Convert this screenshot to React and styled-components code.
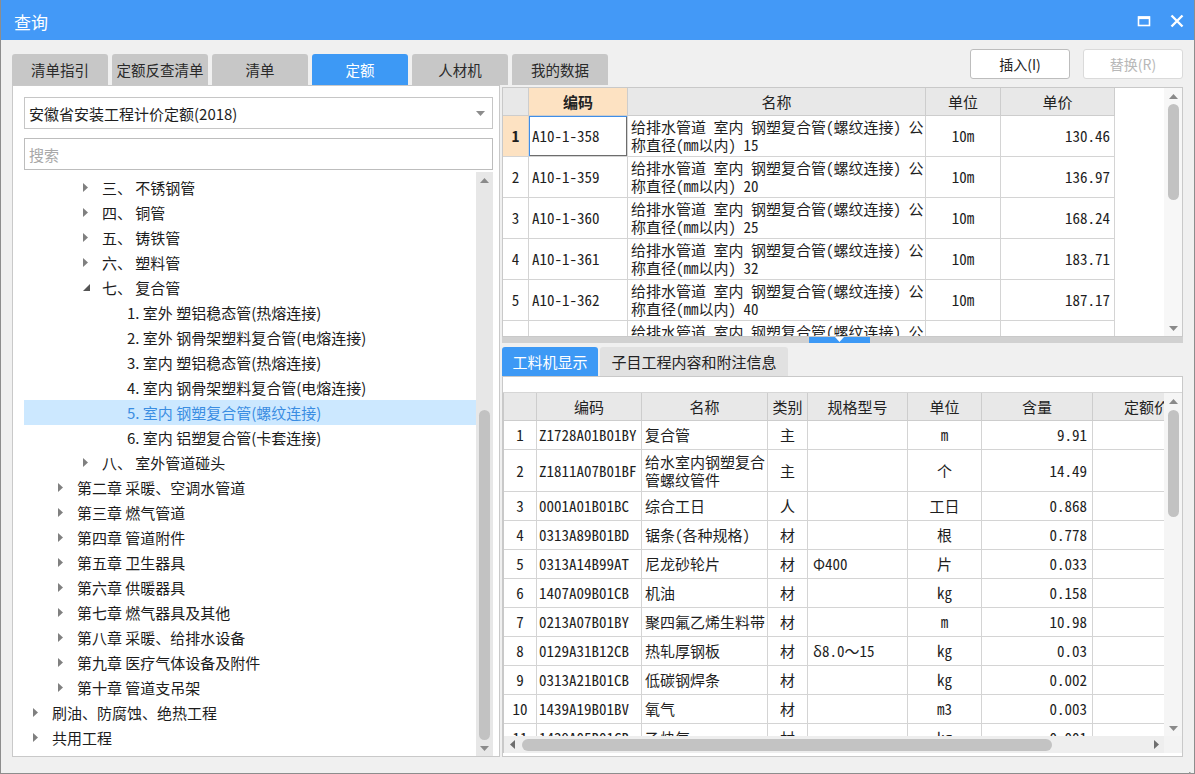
import React from 'react';
import styled, { createGlobalStyle } from 'styled-components';

const UI_FONT = `"Noto Sans CJK SC", "Noto Sans", sans-serif`;
const GRID_FONT = `"Noto Sans Mono CJK SC", "Noto Sans CJK SC", "Liberation Mono", monospace`;

const GlobalStyle = createGlobalStyle`
  html, body { margin: 0; padding: 0; background: #ffffff; }
  body { font-family: ${UI_FONT}; }
  * { box-sizing: border-box; }
`;

const Window = styled.div`
  position: relative;
  width: 1195px;
  height: 774px;
  display: flex;
  flex-direction: column;
  background: #f0f0f0;
  border: 1px solid #8d8d8d;
  border-top: none;
`;

const TitleBar = styled.div`
  height: 40px;
  flex: none;
  display: flex;
  align-items: center;
  justify-content: space-between;
  padding: 0 9px 0 13px;
  background: #4399f7;
  color: #ffffff;
`;

const TitleText = styled.span`
  font-size: 17px;
  margin-top: 2px;
`;

const TitleButtons = styled.div`
  display: flex;
  gap: 17px;
  margin-top: 1px;
`;

const Body = styled.div`
  flex: 1;
  min-height: 0;
  display: flex;
  flex-direction: column;
  padding: 0 11px 15px 11px;
`;

const TopRow = styled.div`
  height: 45px;
  flex: none;
  display: flex;
  justify-content: space-between;
`;

const Tabs = styled.div`
  display: flex;
  gap: 4px;
  align-self: flex-end;
`;

const Tab = styled.div`
  width: 96px;
  height: 31px;
  display: flex;
  align-items: center;
  justify-content: center;
  border-radius: 3px 3px 0 0;
  font-size: 14.5px;
  background: ${p => (p.$active ? '#3d99f5' : '#c7c7c7')};
  color: ${p => (p.$active ? '#ffffff' : '#2a2a2a')};
`;

const Buttons = styled.div`
  display: flex;
  gap: 13px;
  margin-top: 9px;
`;

const Button = styled.div`
  width: 100px;
  height: 30px;
  display: flex;
  align-items: center;
  justify-content: center;
  background: #ffffff;
  border: 1px solid ${p => (p.$disabled ? '#dadada' : '#bdbdbd')};
  border-radius: 3px;
  font-size: 14px;
  color: ${p => (p.$disabled ? '#b8b8b8' : '#222222')};
`;

const Main = styled.div`
  height: 672px;
  flex: none;
  display: flex;
`;

const LeftPanel = styled.div`
  width: 488px;
  flex: none;
  display: flex;
  flex-direction: column;
  background: #ffffff;
  border: 1px solid #c9c9c9;
  padding: 11px 6px 0 11px;
`;

const Select = styled.div`
  height: 32px;
  flex: none;
  display: flex;
  align-items: center;
  justify-content: space-between;
  padding: 0 7px 0 4px;
  border: 1px solid #c6c6c6;
  font-size: 15px;
  color: #1e1e1e;
`;

const Search = styled.input`
  height: 32px;
  flex: none;
  margin-top: 9px;
  padding: 0 4px;
  border: 1px solid #bdbdbd;
  outline: none;
  font-family: ${UI_FONT};
  font-size: 15px;
  &::placeholder { color: #a8a8a8; }
`;

const TreeBox = styled.div`
  flex: 1;
  display: flex;
  margin-top: 2px;
  min-height: 0;
`;

const TreeList = styled.div`
  flex: 1;
  min-width: 0;
  padding-top: 3px;
  overflow: hidden;
`;

const TreeRow = styled.div`
  height: 25px;
  display: flex;
  align-items: center;
  padding-left: ${p => p.$level * 25}px;
  background: ${p => (p.$selected ? '#cce8ff' : 'transparent')};
  color: ${p => (p.$selected ? '#3a8de2' : '#1c1c1c')};
  font-size: 15px;
  white-space: nowrap;
`;

const ArrowSlot = styled.span`
  width: 28px;
  flex: none;
  display: flex;
  align-items: center;
  padding-left: 9px;
`;

const RightPanel = styled.div`
  flex: 1;
  min-width: 0;
  min-height: 0;
  display: flex;
  flex-direction: column;
  padding: 2px 0 0 2px;
`;

const UpperGrid = styled.div`
  height: 250px;
  flex: none;
  display: flex;
  background: #ffffff;
  border: 1px solid #c9c9c9;
`;

const GridArea = styled.div`
  flex: 1;
  min-width: 0;
  min-height: 0;
  overflow: hidden;
  background: #ffffff;
`;

const Grid = styled.table`
  border-collapse: collapse;
  table-layout: fixed;
  width: ${p => p.$width}px;
  margin: -1px 0 0 -1px;
  font-family: ${GRID_FONT};
  font-size: 15px;
  color: #1e1e1e;
`;

const HeadRow = styled.tr`
  height: 28px;
`;

const BodyRow = styled.tr`
  height: ${p => p.$h}px;
`;

const HeadCell = styled.th`
  padding: 0;
  border: 1px solid #cdcdcd;
  background: ${p => (p.$hl ? '#fde2c2' : '#e8e8e8')};
  font-family: ${UI_FONT};
  font-size: 15px;
  font-weight: ${p => (p.$hl ? 700 : 400)};
  color: #222222;
  text-align: center;
  white-space: nowrap;
  overflow: hidden;
`;

const Cell = styled.td`
  border: 1px solid #d4d4d4;
  padding: 0 ${p => p.$pr ?? 3}px 0 ${p => p.$pl ?? 3}px;
  text-align: ${p => p.$align || 'left'};
  vertical-align: middle;
  background: ${p => (p.$hl ? '#fde2c2' : '#ffffff')};
  font-weight: ${p => (p.$bold ? 700 : 400)};
  box-shadow: ${p => (p.$focus ? 'inset 1px 1px 0 #3f8ee8, inset -1px -1px 0 #6d6d6d' : 'none')};
  line-height: 18px;
  white-space: ${p => (p.$wrap ? 'normal' : 'nowrap')};
  overflow: hidden;
`;

const Splitter = styled.div`
  height: 6px;
  flex: none;
  display: flex;
  padding-left: 307px;
  background: #d1d1d1;
`;

const SplitHandle = styled.div`
  width: 61px;
  height: 6px;
  display: flex;
  justify-content: center;
  background: #3d99f5;
`;

const LowerTabs = styled.div`
  height: 29px;
  flex: none;
  margin-top: 4px;
  display: flex;
  gap: 2px;
`;

const LowerTab = styled.div`
  width: ${p => p.$w}px;
  display: flex;
  align-items: center;
  justify-content: center;
  border-radius: 3px 3px 0 0;
  font-size: 15px;
  background: ${p => (p.$active ? '#3d99f5' : '#e1e1e1')};
  color: ${p => (p.$active ? '#ffffff' : '#222222')};
`;

const LowerPanel = styled.div`
  flex: 1;
  min-height: 0;
  display: flex;
  flex-direction: column;
  background: #ffffff;
  border: 1px solid #c9c9c9;
  padding-bottom: 3px;
`;

const ToolStrip = styled.div`
  height: 16px;
  flex: none;
  border-bottom: 1px solid #d6d6d6;
`;

const LowerGrid = styled.div`
  flex: 1;
  display: flex;
  min-height: 0;
  border-left: 1px solid #c9c9c9;
`;

const HScrollRow = styled.div`
  height: 17px;
  flex: none;
  display: flex;
  border-left: 1px solid #c9c9c9;
  background: #eeeeee;
`;

const HTrack = styled.div`
  flex: 1;
  display: flex;
  align-items: center;
`;

const HThumb = styled.div`
  width: ${p => p.$w}px;
  height: 12px;
  margin-left: 2px;
  border-radius: 6px;
  background: #c3c3c3;
`;

const HArrowBox = styled.div`
  width: 16px;
  height: 17px;
  flex: none;
  display: flex;
  align-items: center;
  justify-content: center;
`;

const HFill = styled.div`
  flex: 1;
`;

const Corner = styled.div`
  width: 18px;
  flex: none;
  background: #f3f3f3;
`;

const VTrack = styled.div`
  width: ${p => p.$w}px;
  flex: none;
  display: flex;
  flex-direction: column;
  background: ${p => p.$bg};
`;

const VArrowBox = styled.div`
  height: 16px;
  flex: none;
  display: flex;
  align-items: center;
  justify-content: center;
`;

const VThumbArea = styled.div`
  flex: 1;
  display: flex;
  flex-direction: column;
  align-items: center;
`;

const VThumb = styled.div`
  width: 11px;
  height: ${p => p.$h}px;
  margin-top: ${p => p.$top}px;
  border-radius: 6px;
  background: #c2c2c2;
`;

const Grip = styled.div`
  position: absolute;
  right: 3px;
  bottom: 3px;
  width: 9px;
  height: 9px;
`;

const Tri = ({ dir, color = '#7c7c7c' }) => {
  const shapes = {
    up: { w: 9, h: 5, p: '0,5 4.5,0 9,5' },
    down: { w: 9, h: 5, p: '0,0 9,0 4.5,5' },
    left: { w: 5, h: 9, p: '5,0 5,9 0,4.5' },
    right: { w: 5, h: 9, p: '0,0 5,4.5 0,9' },
  };
  const s = shapes[dir];
  return (
    <svg width={s.w} height={s.h} viewBox={`0 0 ${s.w} ${s.h}`}>
      <polygon points={s.p} fill={color} />
    </svg>
  );
};

const TreeArrow = ({ open }) =>
  open ? (
    <svg width="7" height="7" viewBox="0 0 7 7">
      <polygon points="7,0 7,7 0,7" fill="#555555" />
    </svg>
  ) : (
    <svg width="5" height="9" viewBox="0 0 5 9">
      <polygon points="0,0 5,4.5 0,9" fill="#808080" />
    </svg>
  );

const VScroll = ({ width, bg, top, size }) => (
  <VTrack $w={width} $bg={bg}>
    <VArrowBox>
      <Tri dir="up" color="#8a8a8a" />
    </VArrowBox>
    <VThumbArea>
      <VThumb $top={top} $h={size} />
    </VThumbArea>
    <VArrowBox>
      <Tri dir="down" color="#8a8a8a" />
    </VArrowBox>
  </VTrack>
);

const tree = [
  { level: 2, text: '三、 不锈钢管', arrow: 'closed' },
  { level: 2, text: '四、 铜管', arrow: 'closed' },
  { level: 2, text: '五、 铸铁管', arrow: 'closed' },
  { level: 2, text: '六、 塑料管', arrow: 'closed' },
  { level: 2, text: '七、 复合管', arrow: 'open' },
  { level: 3, text: '1. 室外 塑铝稳态管(热熔连接)' },
  { level: 3, text: '2. 室外 钢骨架塑料复合管(电熔连接)' },
  { level: 3, text: '3. 室内 塑铝稳态管(热熔连接)' },
  { level: 3, text: '4. 室内 钢骨架塑料复合管(电熔连接)' },
  { level: 3, text: '5. 室内 钢塑复合管(螺纹连接)', selected: true },
  { level: 3, text: '6. 室内 铝塑复合管(卡套连接)' },
  { level: 2, text: '八、 室外管道碰头', arrow: 'closed' },
  { level: 1, text: '第二章 采暖、空调水管道', arrow: 'closed' },
  { level: 1, text: '第三章 燃气管道', arrow: 'closed' },
  { level: 1, text: '第四章 管道附件', arrow: 'closed' },
  { level: 1, text: '第五章 卫生器具', arrow: 'closed' },
  { level: 1, text: '第六章 供暖器具', arrow: 'closed' },
  { level: 1, text: '第七章 燃气器具及其他', arrow: 'closed' },
  { level: 1, text: '第八章 采暖、给排水设备', arrow: 'closed' },
  { level: 1, text: '第九章 医疗气体设备及附件', arrow: 'closed' },
  { level: 1, text: '第十章 管道支吊架', arrow: 'closed' },
  { level: 0, text: '刷油、防腐蚀、绝热工程', arrow: 'closed' },
  { level: 0, text: '共用工程', arrow: 'closed' },
];

const quotas = [
  ['A10-1-358', '15', '130.46'],
  ['A10-1-359', '20', '136.97'],
  ['A10-1-360', '25', '168.24'],
  ['A10-1-361', '32', '183.71'],
  ['A10-1-362', '40', '187.17'],
  ['A10-1-363', '50', '203.52'],
];

const upperCols = [26, 99, 298, 75, 114];
const lowerCols = [33, 105, 126, 40, 100, 74, 111, 108];

const materials = [
  ['Z1728A01B01BY', '复合管', '主', '', 'm', '9.91'],
  ['Z1811A07B01BF', '给水室内钢塑复合管螺纹管件', '主', '', '个', '14.49'],
  ['0001A01B01BC', '综合工日', '人', '', '工日', '0.868'],
  ['0313A89B01BD', '锯条(各种规格)', '材', '', '根', '0.778'],
  ['0313A14B99AT', '尼龙砂轮片', '材', 'Φ400', '片', '0.033'],
  ['1407A09B01CB', '机油', '材', '', 'kg', '0.158'],
  ['0213A07B01BY', '聚四氟乙烯生料带', '材', '', 'm', '10.98'],
  ['0129A31B12CB', '热轧厚钢板', '材', 'δ8.0～15', 'kg', '0.03'],
  ['0313A21B01CB', '低碳钢焊条', '材', '', 'kg', '0.002'],
  ['1439A19B01BV', '氧气', '材', '', 'm3', '0.003'],
  ['1439A05B01CB', '乙炔气', '材', '', 'kg', '0.001'],
];

const Cols = ({ widths }) => (
  <colgroup>
    {widths.map((w, i) => (
      <col key={i} style={{ width: w }} />
    ))}
  </colgroup>
);

const App = () => (
  <>
    <GlobalStyle />
    <Window>
      <TitleBar>
        <TitleText>查询</TitleText>
        <TitleButtons>
          <svg width="16" height="16" viewBox="0 0 16 16">
            <rect x="2.5" y="4" width="11" height="8.5" fill="none" stroke="#fff" strokeWidth="1.6" />
            <rect x="2" y="3.5" width="12" height="2.6" fill="#fff" />
          </svg>
          <svg width="16" height="16" viewBox="0 0 16 16">
            <path d="M2.5 2.5 L13.5 13.5 M13.5 2.5 L2.5 13.5" stroke="#fff" strokeWidth="2.4" />
          </svg>
        </TitleButtons>
      </TitleBar>
      <Body>
        <TopRow>
          <Tabs>
            <Tab>清单指引</Tab>
            <Tab>定额反查清单</Tab>
            <Tab>清单</Tab>
            <Tab $active>定额</Tab>
            <Tab>人材机</Tab>
            <Tab>我的数据</Tab>
          </Tabs>
          <Buttons>
            <Button>插入(I)</Button>
            <Button $disabled>替换(R)</Button>
          </Buttons>
        </TopRow>
        <Main>
          <LeftPanel>
            <Select>
              <span>安徽省安装工程计价定额(2018)</span>
              <Tri dir="down" color="#8c8c8c" />
            </Select>
            <Search placeholder="搜索" />
            <TreeBox>
              <TreeList>
                {tree.map((n, i) => (
                  <TreeRow key={i} $level={n.level} $selected={n.selected}>
                    <ArrowSlot>{n.arrow && <TreeArrow open={n.arrow === 'open'} />}</ArrowSlot>
                    {n.text}
                  </TreeRow>
                ))}
              </TreeList>
              <VScroll width={17} bg="#e7e7e7" top={222} size={330} />
            </TreeBox>
          </LeftPanel>
          <RightPanel>
            <UpperGrid>
              <GridArea>
                <Grid $width={612}>
                  <Cols widths={upperCols} />
                  <thead>
                    <HeadRow>
                      <HeadCell />
                      <HeadCell $hl>编码</HeadCell>
                      <HeadCell>名称</HeadCell>
                      <HeadCell>单位</HeadCell>
                      <HeadCell>单价</HeadCell>
                    </HeadRow>
                  </thead>
                  <tbody>
                    {quotas.map(([code, dia, price], i) => (
                      <BodyRow key={code} $h={41}>
                        <Cell $align="center" $hl={i === 0} $bold={i === 0}>
                          {i + 1}
                        </Cell>
                        <Cell $focus={i === 0}>{code}</Cell>
                        <Cell $pr={0}>
                          给排水管道 室内 钢塑复合管(螺纹连接) 公<br />
                          称直径(mm以内) {dia}
                        </Cell>
                        <Cell $align="center">10m</Cell>
                        <Cell $align="right" $pr={4}>
                          {price}
                        </Cell>
                      </BodyRow>
                    ))}
                  </tbody>
                </Grid>
              </GridArea>
              <VScroll width={18} bg="#f7f7f7" top={0} size={96} />
            </UpperGrid>
            <Splitter>
              <SplitHandle>
                <Tri dir="down" color="#ffffff" />
              </SplitHandle>
            </Splitter>
            <LowerTabs>
              <LowerTab $w={96} $active>
                工料机显示
              </LowerTab>
              <LowerTab $w={188}>子目工程内容和附注信息</LowerTab>
            </LowerTabs>
            <LowerPanel>
              <ToolStrip />
              <LowerGrid>
                <GridArea>
                  <Grid $width={697}>
                    <Cols widths={lowerCols} />
                    <thead>
                      <HeadRow>
                        <HeadCell />
                        <HeadCell>编码</HeadCell>
                        <HeadCell>名称</HeadCell>
                        <HeadCell>类别</HeadCell>
                        <HeadCell>规格型号</HeadCell>
                        <HeadCell>单位</HeadCell>
                        <HeadCell>含量</HeadCell>
                        <HeadCell>定额价</HeadCell>
                      </HeadRow>
                    </thead>
                    <tbody>
                      {materials.map(([code, name, kind, spec, unit, qty], i) => (
                        <BodyRow key={code} $h={i === 1 ? 42 : 29}>
                          <Cell $align="center">{i + 1}</Cell>
                          <Cell $pl={2} $pr={0}>
                            {code}
                          </Cell>
                          <Cell $wrap $pr={2}>
                            {name}
                          </Cell>
                          <Cell $align="center">{kind}</Cell>
                          <Cell $pl={5}>{spec}</Cell>
                          <Cell $align="center">{unit}</Cell>
                          <Cell $align="right" $pr={5}>
                            {qty}
                          </Cell>
                          <Cell />
                        </BodyRow>
                      ))}
                    </tbody>
                  </Grid>
                </GridArea>
                <VScroll width={18} bg="#f5f5f5" top={1} size={107} />
              </LowerGrid>
              <HScrollRow>
                <HTrack>
                  <HArrowBox>
                    <Tri dir="left" color="#6e6e6e" />
                  </HArrowBox>
                  <HThumb $w={530} />
                  <HFill />
                  <HArrowBox>
                    <Tri dir="right" color="#6e6e6e" />
                  </HArrowBox>
                </HTrack>
                <Corner />
              </HScrollRow>
            </LowerPanel>
          </RightPanel>
        </Main>
      </Body>
      <Grip>
        <svg width="9" height="9" viewBox="0 0 9 9">
          {[
            [7, 1],
            [4, 4],
            [7, 4],
            [1, 7],
            [4, 7],
            [7, 7],
          ].map(([x, y], i) => (
            <rect key={i} x={x} y={y} width="1.5" height="1.5" fill="#9a9a9a" />
          ))}
        </svg>
      </Grip>
    </Window>
  </>
);

export default App;
